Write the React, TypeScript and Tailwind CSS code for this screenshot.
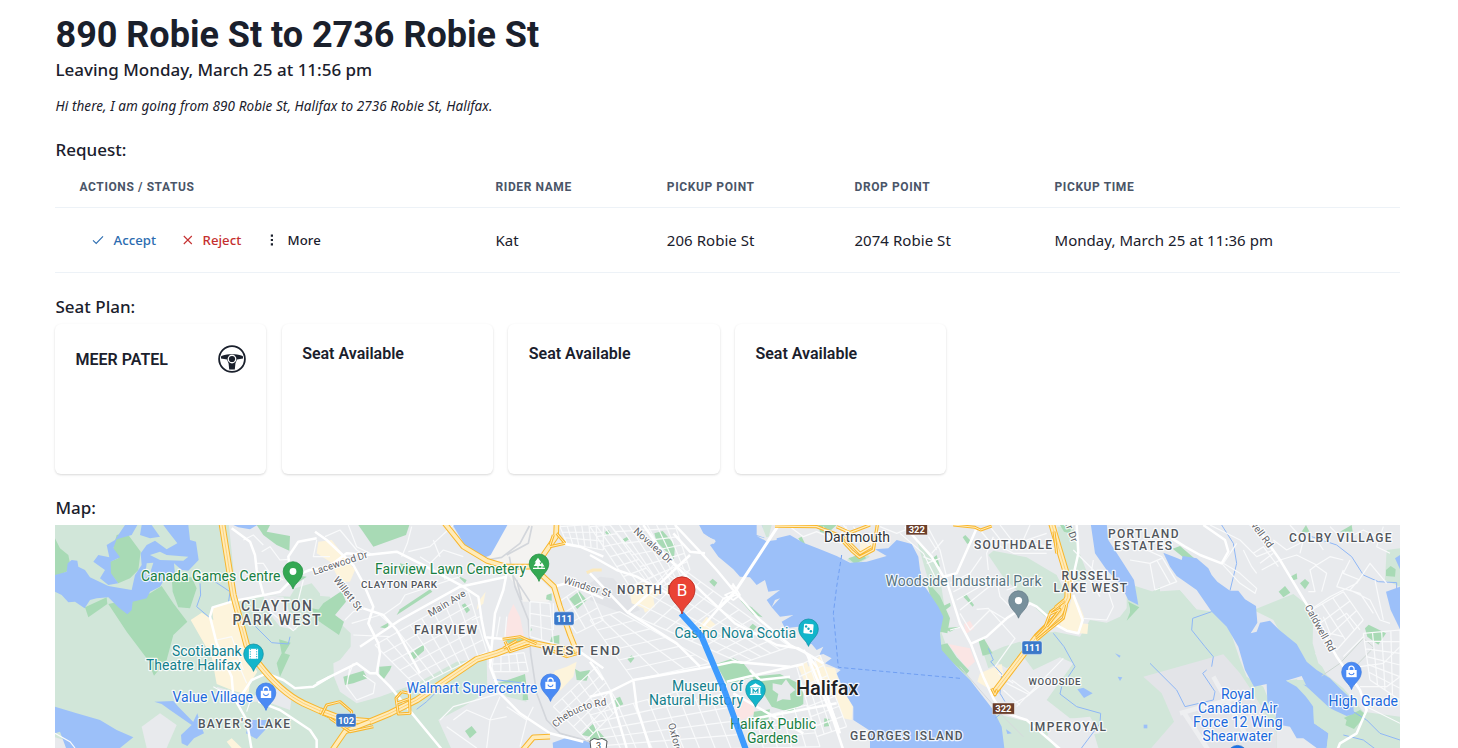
import type { ReactNode } from "react";

type Pt = [number, number];

/* ---------- map geometry ---------- */

// Each map sheet is drawn at triple scale, offset by its western edge.
const SHEET_X = { a: 50, b: 320, c: 590, d: 860, e: 1130 } as const;
type SheetId = keyof typeof SHEET_X;

function Sheet({ id, children }: { id: SheetId; children: ReactNode }) {
  return <g transform={`translate(${SHEET_X[id]} 520) scale(0.33333)`}>{children}</g>;
}

const lerp = (p: Pt, q: Pt, t: number): Pt => [p[0] + (q[0] - p[0]) * t, p[1] + (q[1] - p[1]) * t];

// Street grid inside the quadrilateral a-b-c-d.
function streets(a: Pt, b: Pt, c: Pt, d: Pt, nu: number, nv: number) {
  let path = "";
  for (let i = 0; i <= nu; i++) {
    const p = lerp(a, b, i / nu);
    const q = lerp(d, c, i / nu);
    path += `M${p[0].toFixed(1)},${p[1].toFixed(1)}L${q[0].toFixed(1)},${q[1].toFixed(1)}`;
  }
  for (let j = 0; j <= nv; j++) {
    const p = lerp(a, d, j / nv);
    const q = lerp(b, c, j / nv);
    path += `M${p[0].toFixed(1)},${p[1].toFixed(1)}L${q[0].toFixed(1)},${q[1].toFixed(1)}`;
  }
  return path;
}

const C = {
  urban: "#e8eaed",
  nature: "#d1e6d9",
  park: "#a8dab5",
  water: "#9cc0f9",
  shop: "#fdf4dc",
  health: "#fbe5e4",
  rail: "#f4f3f1",
};

const AREAS: [SheetId, string, string[]][] = [
  ["a", C.nature, ["0,0 960,0 960,700 0,700"]],
  ["b", C.urban, ["0,0 850,0 850,700 0,700"]],
  ["a", C.urban, [
    "535,0 830,0 830,245 785,190 735,205 720,230 640,225 560,240",
    "275,620 330,580 380,615 350,684 290,684", "15,652 60,665 80,690 15,690",
    "500,500 600,530 690,505 725,530 720,570 650,545 560,545 520,540",
    "640,225 700,230 740,330 690,320 650,270",
  ]],
  ["b", C.nature, [
    "-30,225 30,230 50,300 92,340 92,380 60,420 40,430 42,470 60,515 110,550 180,530 290,490 410,425 500,415 502,515 430,560 355,600 400,700 -30,700",
    "520,490 600,470 620,545 560,530",
  ]],
  ["c", C.nature, ["505,15 545,15 535,55 510,45", "770,120 800,135 840,110 820,95", "640,640 700,610 780,640 800,700 640,700"]],
  ["c", C.urban, ["640,600 790,600 840,640 800,700 600,700"]],
  ["d", C.nature, [
    "385,105 400,92 500,112 590,165 622,230 580,270 555,290 500,240 430,172",
    "585,335 660,350 690,300 740,308 780,290 800,265 900,200 900,700 720,700 690,600 630,595 560,540 640,430 600,412 520,450 480,395 540,340",
    "592,20 640,20 655,90 690,180 630,185 600,80", "480,365 510,392 440,445 415,430 385,445 372,405 430,380",
    "405,580 480,600 540,610 610,700 425,700", "170,60 235,140 255,270 245,340 262,385 320,460 345,500 300,470 235,400 225,250",
  ]],
  ["d", C.urban, ["590,600 690,590 720,640 640,650 600,700 560,650", "700,0 760,0 790,60 860,80 860,200 740,120"]],
  ["e", C.nature, [
    "-10,190 70,215 150,210 200,268 250,275 300,330 330,420 350,470 400,500 440,600 440,700 -10,700",
    "370,270 490,222 550,270 548,370 565,430 600,460 660,500 700,570 810,560 810,700 590,700 480,480 570,480 480,390 430,300",
    "770,90 810,85 810,200 765,180",
  ]],
  ["e", "#e3e4e8", ["40,470 280,403 330,460 370,520 440,640 440,700 50,700 132,605 95,520"]],
  ["e", C.urban, ["555,400 600,380 650,430 720,470 810,540 810,590 700,575 640,505 590,465", "70,190 140,195 240,268 200,268 150,210"]],
  ["b", C.rail, ["560,0 730,0 705,60 655,110 655,170 700,215 685,245 610,245 590,200 560,160 500,130 510,105"]],
  ["c", "#e1e3e7", ["30,170 70,175 150,270 110,285 0,240 0,190"]],

  ["a", C.shop, ["422,300 455,278 490,300 485,262 548,242 590,400 622,455 600,490 595,525 550,512 500,492 485,410", "530,665 545,655 575,684 545,684"]],
  ["b", C.shop, ["-5,65 35,60 105,150 90,185 60,185 30,125 -10,100", "740,440 770,425 760,470 720,512 690,482 705,452", "475,245 497,215 490,250 470,270", "440,90 480,108 520,135 500,135"]],
  ["c", C.shop, ["120,215 145,190 215,190 205,225 190,235 195,260 165,278 160,265 125,250", "330,315 350,290 378,315 340,345", "622,435 650,425 655,440 690,408 708,440 735,445 745,480 788,560 785,600 760,595 735,520 650,500"]],
  ["d", C.shop, ["640,220 660,260 672,290 660,340 605,325 600,312 625,270", "660,310 685,312 682,342 658,340", "360,460 425,432 432,475 402,515 352,485", "0,60 40,60 30,95 0,95"]],
  ["b", C.health, ["580,252 600,290 612,348 555,350 565,285"]],
  ["c", C.health, ["440,552 480,535 497,580 455,600 430,578"]],
  ["d", C.health, ["312,312 330,302 343,325 318,342", "265,372 330,385 345,425 322,445 290,405"]],

  ["a", C.park, [
    "15,55 30,85 55,105 60,130 50,155 15,170", "200,45 230,38 272,95 265,150 240,175 205,190 180,160 180,125 205,115 188,90",
    "335,198 370,250 412,305 370,345 350,420 312,467 290,415 230,335 175,252 230,240 300,220", "105,262 170,232 172,252 115,292",
    "362,128 382,170 425,172 440,205 420,265 385,262 368,215", "620,15 660,15 650,35 720,48 718,92 680,75 640,45",
    "687,358 722,368 703,400 720,405 690,470 680,430 695,400", "785,265 840,275 840,318 800,300",
    "730,165 770,170 725,200",
  ]],
  ["b", C.park, [
    "115,15 268,15 258,45 160,80", "10,250 65,213 78,245 45,285 72,305 57,345 5,310 -20,290", "230,285 240,268 330,208 337,215",
    "265,405 312,372 312,392 280,420", "425,255 435,250 450,270 440,280", "180,322 205,308 205,327", "70,470 130,452 142,475 100,490 75,495",
    "178,440 215,437 210,450 188,482 178,470", "555,360 622,353 580,382", "748,237 778,214 800,240 772,267", "765,447 780,455 810,450 800,482 770,480",
    "435,633 455,618 470,637 450,655", "785,645 818,612 860,660", "695,350 718,345 718,372 690,365", "530,492 615,462 625,540 608,540 610,485",
    "410,165 440,180 435,190", "240,130 280,140 270,165 245,155", "680,225 695,220 695,242 678,238", "632,320 636,330 630,335",
  ]],
  ["c", C.park, [
    "193,40 218,33 255,75 252,118 200,65", "358,185 368,176 382,188 373,200", "378,432 430,415 460,430 492,470 440,485 410,490",
    "487,470 570,462 625,490 640,520 640,552 600,577 545,560 520,520 500,515", "492,575 540,568 535,598 500,605 490,590", "478,322 488,311 500,320 490,332",
    "112,417 125,406 133,415 122,429", "73,537 90,530 100,553 80,562", "0,618 40,658 0,660", "703,595 718,597 720,618 702,620",
    "450,240 485,262 518,292 490,285", "98,58 112,50 118,58 104,66", "45,36 55,30 62,40 52,47", "685,15 740,15 710,42 690,35", "625,55 635,50 655,92 648,96", "775,115 820,100 828,115 795,132",
  ]],
  ["c", C.urban, ["548,490 575,495 588,478 600,495 616,510 600,522 602,540 578,538 560,545 565,522 548,510"]],
  ["d", C.park, [
    "240,375 262,370 290,412 328,452 318,464 280,430 246,402", "200,182 240,228 270,295 262,340 240,335 247,290 210,228", "355,360 372,356 398,400 368,407",
    "308,52 316,45 335,65 322,72", "308,228 318,222 342,255 338,260", "218,115 230,105 240,140 225,135", "600,15 635,15 630,40 612,35",
    "245,260 270,248 272,258 250,275", "250,325 300,320 270,335", "805,245 838,262 800,302 812,272",
  ]],
  ["e", C.park, [
    "128,86 150,78 205,125 182,130", "446,215 465,198 481,218 460,232", "478,172 500,160 502,177 485,182", "510,190 525,177 538,188 525,208",
    "705,325 716,314 768,340 745,374 712,350", "768,150 782,138 797,148 795,170 768,168", "640,595 690,570 708,585 672,627 645,615", "0,260 25,262 0,290",
    "515,35 528,15 540,38", "630,35 665,15 668,35",
  ]],

  ["a", C.water, [
    "15,165 50,155 53,130 65,120 82,122 85,140 105,150 120,172 175,198 245,210 255,165 275,135 272,100 290,75 315,62 350,88 382,70 355,35 340,15 415,15 420,60 438,65 446,120 415,152 395,150 372,130 375,165 345,175 330,200 300,215 290,235 248,245 245,270 232,283 205,262 175,232 140,235 120,240 104,265 75,245 55,247 35,225 15,215",
    "225,15 262,15 245,45 200,58 190,85 210,112 182,125 183,160 205,190 175,195 150,175 165,150 130,125 145,105 178,112 170,75 195,60",
    "275,15 305,15 330,50 300,55 270,45", "15,560 80,580 150,600 200,630 250,652 210,684 48,684 30,635 15,640",
    "313,545 370,543 385,560 432,608 425,615 360,570 335,552", "393,645 425,615 442,580 452,615 462,640 432,655 412,678 395,670",
    "588,640 600,600 652,600 650,625 620,657", "550,15 622,15 600,28 565,22",
  ]],
  ["a", C.nature, ["300,105 330,95 350,105 415,110 400,122 330,120", "290,130 310,128 300,160 285,175"]],
  ["b", C.water, ["395,10 565,10 512,105 482,118 440,85", "698,668 735,655 800,664 850,690 700,690"]],
  ["c", C.water, [
    "325,10 515,10 525,62 560,55 600,45 640,68 690,88 740,108 780,128 830,125 890,108 855,88 895,85 920,60 965,72 985,110 990,150 1005,200 1045,260 1060,290 1050,340 1055,390 1100,440 1140,480 1210,570 1235,620 1245,700 840,700 840,632 790,600 790,560 765,520 740,460 752,450 705,430 725,415 700,402 688,405 700,380 680,390 665,372 650,375 648,350 630,340 625,320 585,325 575,305 610,285 570,290 545,262 570,235 555,240 545,262 530,240 570,210 535,215 525,180 500,195 480,172 450,170 430,148 385,110 360,75 378,65 340,40",
  ]],
  ["c", C.urban, ["320,22 340,45 376,60 372,72 350,62", "500,15 515,15 530,55 500,45", "500,48 525,55 560,40 560,60 530,64", "830,650 840,684 810,684"]],
  ["d", C.urban, ["0,655 25,690 0,690"]],
  ["d", C.water, [
    "692,10 740,10 745,60 790,130 822,180 835,255 805,240 780,190 740,150 705,100", "652,508 670,503 698,520 672,534", "765,400 782,407 778,413", "773,470 787,472 780,483", "438,628 455,640 442,642",
  ]],
  ["e", C.water, [
    "100,98 135,112 155,120 158,108 200,115 235,145 245,165 262,185 300,212 325,212 345,238 378,258 382,308 362,340 380,335 390,308 420,302 448,330 500,372 530,425 560,450 600,475 635,510 668,540 672,582 650,588 590,560 540,520 515,468 468,482 500,492 528,495 550,560 552,610 595,640 590,684 560,684 520,655 500,655 480,620 435,612 438,580 412,545 410,492 372,500 345,450 325,380 290,320 245,275 200,210 140,168 120,140",
    "768,215 810,200 810,328 782,270", "795,115 810,105 810,148", "41,614 52,614 52,625 41,625",
  ]],
  ["e", C.nature, ["468,482 500,478 535,505 595,560 650,600 640,640 600,684 590,684 596,640 552,610 550,560 528,530 500,500"]],
];

const CREEKS: [SheetId, string][] = [
  ["a", "M450,190L452,225 440,260 485,298M495,185L540,215 535,250M615,318L665,368 715,372 720,350"],
  ["b", "M345,520L320,545 290,568M520,478L615,490"],
  ["d", "M385,385L400,420 392,425 425,462 420,520 435,545M580,340L612,380 645,440 605,500 600,522 650,560 722,580 720,610 660,690M430,575L405,595"],
  ["e", "M275,15L310,70 320,130 300,212M245,275L188,295 185,330 225,380 250,410 245,440M60,430L140,510 165,560 250,540 255,515 218,460 230,450M545,50L620,75 665,110 700,165 745,185 800,188 800,205M670,575L710,600 750,640 810,660M640,645L700,660 740,690"],
];

const MINOR: [SheetId, string][] = [
  ["a", "M635,95L660,80 690,120 715,118M580,60L610,45 640,75M700,180L660,160 640,130 620,130M500,360L545,350 580,450M520,430L560,420 590,490M600,545L590,575M655,270L730,332 745,318M15,640L60,665 75,684M760,180L740,260M800,60L790,110 840,110M490,500L545,530"],
  ["b", streets([165, 375], [445, 215], [500, 395], [290, 500], 8, 5)],
  ["b", streets([520, 410], [612, 398], [625, 455], [515, 455], 4, 2)],
  ["b", streets([700, 560], [830, 440], [900, 560], [800, 660], 5, 5) + streets([720, 20], [850, 10], [850, 90], [740, 70], 6, 3)],
  ["b", streets([710, 250], [800, 190], [850, 300], [770, 340], 3, 3) + streets([630, 245], [690, 250], [700, 370], [630, 350], 2, 3)],
  ["b", "M15,50L60,30 110,90 140,110M85,15L110,80 160,105M275,20L262,70 245,110M265,95L330,80 400,15M300,110L330,130 370,90 430,110M340,60L360,110M370,140L375,180M190,285L240,250 255,225 420,170M75,300L100,275 130,265M95,310L180,285 230,330M100,345L210,350M90,440L80,500 110,540 160,520 165,490 130,465M100,430L85,470M455,300L480,290M360,600L400,560 540,520M400,600L440,570 510,600 560,590M380,620L470,684M540,530L510,600 500,684M560,560L620,600 600,680M540,290L530,350M560,290L555,350M515,440L540,510 620,515M640,560L620,600M700,250L700,330"],
  ["c", streets([115, 280], [255, 130], [600, 380], [455, 430], 5, 9)],
  ["c", streets([0, 300], [90, 275], [360, 430], [130, 480], 3, 6) + streets([0, 585], [390, 480], [470, 684], [50, 700], 9, 5)],
  ["c", streets([50, 0], [250, 0], [300, 150], [200, 210], 7, 6) + streets([0, 20], [60, 15], [190, 170], [120, 200], 3, 6)],
  ["c", streets([620, 440], [690, 405], [770, 620], [680, 650], 4, 7) + streets([500, 595], [650, 555], [690, 680], [520, 684], 4, 3)],
  ["c", "M600,20L640,50 680,35 740,60 770,20M760,15L800,60 840,40M790,20L840,80M700,20L720,60 790,80"],
  ["d", "M120,40L190,100 240,200M200,15L240,90 262,180M250,60L215,100M190,110L225,125M205,50L230,90M200,130L240,115M270,190L330,160 365,110M280,215L330,190M290,240L410,170M300,270L400,190M300,280L330,330 390,270 440,300M350,268L385,265 465,355 405,440M410,180L420,230 460,270M440,210L470,200M400,50L380,100 385,150M360,30L385,60 460,100 560,100M390,20L430,70 500,60 560,40M420,15L470,80M510,15L490,60 600,90M270,330L300,322M440,490L510,525M455,480L510,520M430,510L480,555M425,570L500,530 560,480M470,560L610,415M415,460L460,490M670,295L740,300 760,260 740,200 700,150 640,90M700,120L690,180 720,230M60,20L110,40 160,20"],
  ["e", streets([545, 270], [640, 215], [700, 300], [620, 390], 3, 3) + streets([700, 340], [810, 330], [810, 540], [720, 480], 4, 6)],
  ["e", "M0,120L60,130 75,210 140,185 95,110 50,90M60,130L95,115M80,120L120,190M240,15L290,40 330,60 380,110 430,90M275,130L330,190 375,220 380,205 330,160 280,130 320,70M340,90L365,140 380,160M370,100L400,80 430,120 445,140M390,130L430,100M395,150L450,120M450,120L500,105 530,120 560,135 600,110 640,120M430,60L470,90 530,60 600,60M480,15L520,60 510,100M560,135L540,150 555,215 535,215M555,135L590,160 575,215M540,270L600,230 680,190 720,130 770,190M640,150L620,200M660,120L640,160 690,180M690,175L660,210 720,240 750,300 780,310M735,180L745,230 760,300M760,20L740,80 780,100M600,20L640,60 700,30 760,60M580,90L560,60M620,300L650,280 690,330M580,290L600,340 640,350M640,410L680,370 700,350M690,500L770,500 810,470M690,440L760,430 810,380M710,560L810,610M620,200L690,220 730,280"],
];

const MAJOR: [SheetId, string][] = [
  ["a", "M545,25L600,65 615,105 620,150 640,222M555,242L640,226 690,215 740,165 780,150 815,145M800,55L745,65 715,110 720,150M555,242L488,262 480,290 500,370 545,470 550,530 590,600 605,690M575,525L605,480 650,460 700,480 735,505 790,500 840,470M625,545L690,570 780,630 800,660 800,690"],
  ["b", "M-15,35L20,60 100,135 130,190 160,260 145,310 175,370 180,400 170,460 210,500 375,700M-10,490L110,430 150,460 175,460M40,130L80,100 140,105 230,95 300,130 430,200 475,230 485,300 495,350 515,400 510,440 540,520 600,580 690,640 790,665M560,160L550,210 525,280 510,430M120,380L240,300 420,200 560,170M130,265L190,285 230,330 300,460M720,70L780,80 850,110M700,200L740,190 850,235M780,395L850,445M495,352L560,358"],
  ["c", "M0,105L80,150 140,170 250,230M160,15L220,100 290,170 340,220 435,310 560,375 625,385 700,430M255,15L330,95 380,150 430,210 510,300 600,375M345,100L300,95 250,40M0,160L110,275 260,370 330,440M110,280L200,200 300,105M0,530L60,515 130,480 360,440 430,425 600,440M340,318L390,260 430,225M410,485L640,432M0,425L40,480M130,480L140,560 180,684M60,515L110,684M480,450L510,480 600,470M430,520L640,640M600,375L650,400 730,600 760,690M640,390L680,440 750,640M470,600L740,550"],
  ["d", "M135,20L170,60 215,110 262,190 300,310 332,370 370,470 400,535 425,575 500,600 615,700M335,370L380,350 440,295 470,275 510,250 530,260 570,295M580,310L620,332 655,340 668,300 640,225M635,190L655,100 650,15M230,170L262,190M250,170L290,160 330,70 352,20"],
  ["e", "M370,5L450,120 540,270 620,410 690,510 710,570 680,640 630,670 620,695M125,55L165,80 210,105 275,130 295,95 285,60 220,15"],
];

const HIGHWAYS: [SheetId, number, string][] = [
  ["a", 15, "M514,0L530,100 550,225 590,375 625,430Q690,515 760,550L845,588"],
  ["b", 15, "M0,572L70,598 150,605 210,580 290,540 470,418 530,400 620,365 690,380 770,395"],
  ["b", 12, "M370,5L430,80 500,122 560,140 630,140M665,165L702,200 720,260 750,345 770,395"],
  ["b", 12, "M710,0L708,50 670,105M30,700L75,635 150,605M600,700L640,652 690,650"],
  ["b", 4, "M5,585L20,555 60,545 95,575 92,600M30,595L90,635 160,620M245,515L268,520 270,580 235,582 228,535 245,515M228,550L270,535M548,358L600,350 650,372M550,385L590,362M555,365L570,395 630,375M710,40L735,70M690,80L735,70M690,390L740,410 775,400M700,45L690,75"],
  ["c", 5, "M555,18L680,20 738,42 785,92 808,112 850,90 858,40 862,15M740,20L780,38 840,15M760,50L810,100 845,80"],
  ["d", 15, "M570,-5L595,80 625,180 623,232 600,280 530,350 402,518"],
  ["d", 4, "M612,245L572,275 555,320 525,350M620,255L610,295 560,335 530,360M395,505L405,525 412,508M582,35L590,100M280,15L345,22 362,30 395,18M612,240L585,262M565,285L600,268 560,320"],
];

function MapCanvas() {
  return (
    <g>
      <rect x="50" y="520" width="1360" height="230" fill={C.urban} />
      {AREAS.map(([id, fill, polys], i) => (
        <Sheet key={i} id={id}>
          {polys.map((p, j) => (
            <polygon key={j} points={p} fill={fill} />
          ))}
        </Sheet>
      ))}
      <g fill="none" strokeLinejoin="round">
        {CREEKS.map(([id, d], i) => (
          <Sheet key={i} id={id}>
            <path d={d} stroke="#8fb7f6" strokeWidth="3" />
          </Sheet>
        ))}
        <Sheet id="b">
          <path d="M490,122L545,112 600,70 628,18M560,105L625,70 636,18M568,110L585,200 625,300 632,400 650,520 680,600 720,640 850,675M575,160L630,245M590,180L605,240" stroke="#d3d6db" strokeWidth="5" />
        </Sheet>
        <Sheet id="c">
          <path d="M-10,158L10,150 35,150" stroke="#fbe9bd" strokeWidth="9" />
        </Sheet>
        <Sheet id="d">
          <path d="M300,440L360,510 430,590 490,650" stroke="#d6d8dc" strokeWidth="3" />
        </Sheet>
        <Sheet id="e">
          <path d="M250,470L345,640M160,575L235,690M150,580L330,530" stroke="#eeeff1" strokeWidth="14" />
          <path d="M575,468L630,430 700,355 732,382 680,435" stroke="#cdd6d2" strokeWidth="3" />
        </Sheet>
        {MINOR.map(([id, d], i) => (
          <Sheet key={i} id={id}>
            <path d={d} stroke="#f9fafb" strokeWidth="3.6" />
          </Sheet>
        ))}
        {MAJOR.map(([id, d], i) => (
          <Sheet key={i} id={id}>
            <path d={d} stroke="#ffffff" strokeWidth="7.5" />
          </Sheet>
        ))}
        <Sheet id="c">
          <path d="M568,12L435,215 390,262" stroke="#ffffff" strokeWidth="9" />
          <path d="M428,190L450,225 430,240 405,225 440,210 425,195M385,262L400,235 440,225" stroke="#ffffff" strokeWidth="5" />
          <path d="M755,105L740,200 730,280 745,442 1110,475" stroke="#6f9ff2" strokeWidth="3" strokeDasharray="13 8" />
        </Sheet>
        {HIGHWAYS.map(([id, w, d], i) => (
          <Sheet key={i} id={id}>
            <path d={d} stroke="#f8b62d" strokeWidth={w + 5} />
            <path d={d} stroke="#ffebb9" strokeWidth={w - 1} />
            {w === 15 && <path d={d} stroke="#fbc65a" strokeWidth="2" />}
          </Sheet>
        ))}
      </g>
    </g>
  );
}

/* ---------- map labels ---------- */

const GREEN = "#188043";
const TEAL = "#12808c";
const BLUE = "#1b69dc";
const GREY = "#50555b";

// text, x, baseline, width, size, colour, weight, rotation
type LabelSpec = [string, number, number, number, number, string, number?, number?];

const LABELS: LabelSpec[] = [
  ["Canada Games Centre", 141, 581, 139.5, 14, GREEN],
  ["Lacewood Dr", 314, 575, 57, 10, "#5f6368", 400, -18],
  ["CLAYTON", 241, 611, 71, 14, GREY, 500],
  ["PARK WEST", 232.5, 625, 88, 14, GREY, 500],
  ["Willett St", 333, 580, 40, 10, "#5f6368", 400, 52],
  ["CLAYTON PARK", 361, 587.5, 76, 9.8, GREY, 500],
  ["Fairview Lawn Cemetery", 375, 573.5, 151, 14, GREEN],
  ["Main Ave", 430.5, 617, 42, 10, "#5f6368", 400, -31],
  ["FAIRVIEW", 414, 634, 63, 12, GREY, 500],
  ["Windsor St", 563, 583, 49, 10, "#5f6368", 400, 17],
  ["WEST END", 542, 655, 78, 13.5, GREY, 500],
  ["Scotiabank", 172, 656, 69.5, 14, TEAL],
  ["Theatre Halifax", 146, 670, 95, 14, TEAL],
  ["Value Village", 172.5, 702, 80.5, 14, BLUE],
  ["BAYER'S LAKE", 198, 728, 92, 12, GREY, 500],
  ["Walmart Supercentre", 406.5, 693, 131, 14, BLUE],
  ["NORTH END", 617, 594, 76, 12, GREY, 500],
  ["Novalea Dr", 633, 532, 48, 10, "#5f6368", 400, 42],
  ["Casino Nova Scotia", 674.5, 638, 121.5, 14, TEAL],
  ["Museum of", 672, 691, 71, 14, TEAL],
  ["Natural History", 649, 705, 94, 14, TEAL],
  ["Halifax Public", 730, 728.5, 86, 14, GREEN],
  ["Gardens", 747, 742.5, 51, 14, GREEN],
  ["Halifax", 796, 695, 62.5, 20, "#202124", 500],
  ["Dartmouth", 824, 542, 66, 14, "#303438"],
  ["Oxford St", 668, 724, 42, 10, "#5f6368", 400, 75],
  ["GEORGES ISLAND", 850, 740, 112.5, 12, GREY, 500],
  ["SOUTHDALE", 974, 549, 78, 12, GREY, 500],
  ["PORTLAND", 1108, 538, 70.5, 12, GREY, 500],
  ["ESTATES", 1114, 550, 58, 12, GREY, 500],
  ["RUSSELL", 1061.5, 580, 57, 12, GREY, 500],
  ["LAKE WEST", 1053.5, 592, 73.5, 12, GREY, 500],
  ["Woodside Industrial Park", 885.5, 586, 156, 14, "#587581"],
  ["WOODSIDE", 1028.5, 685, 52, 9.6, GREY, 500],
  ["IMPEROYAL", 1030, 731, 76, 12, GREY, 500],
  ["COLBY VILLAGE", 1289, 542, 102.5, 12, GREY, 500],
  ["Caldwell Rd", 1304.5, 607, 52, 10, "#5f6368", 400, 61],
  ["Caldwell Rd", 1237, 507, 52, 10, "#5f6368", 400, 53],
  ["Baker Dr", 1058, 505, 40, 10, "#5f6368", 400, 70],
  ["High Grade", 1328.5, 705.5, 69.5, 14, BLUE],
  ["Royal", 1221, 699, 33.5, 14, BLUE],
  ["Canadian Air", 1198, 713, 79.5, 14, BLUE],
  ["Force 12 Wing", 1193, 727, 89.5, 14, BLUE],
  ["Shearwater", 1202.5, 741, 70, 14, BLUE],
];

function Label({ spec }: { spec: LabelSpec }) {
  const [text, x, y, width, size, color, weight = 400, angle = 0] = spec;
  return (
    <text
      x={x}
      y={y}
      textLength={width}
      fontSize={size}
      fontWeight={weight}
      fill={color}
      stroke="#ffffff"
      strokeOpacity="0.85"
      strokeWidth="2.4"
      strokeLinejoin="round"
      paintOrder="stroke"
      transform={angle ? `rotate(${angle} ${x} ${y})` : undefined}
    >
      {text}
    </text>
  );
}

function Pin({ x, y, color, edge, children }: { x: number; y: number; color: string; edge: string; children: ReactNode }) {
  return (
    <g transform={`translate(${x} ${y})`}>
      <path d="M0,17.6C-1.8,11.4 -9.8,8 -9.8,0A9.8,9.8 0 0 1 9.8,0C9.8,8 1.8,11.4 0,17.6Z" fill={color} stroke={edge} strokeWidth="0.7" />
      {children}
    </g>
  );
}

const Bag = () => (
  <g>
    <path d="M-5.2,-2H5.2V5.2H-5.2Z" fill="#fff" />
    <path d="M-2.6,-2V-3.2A2.6,2.6 0 0 1 2.6,-3.2V-2" fill="none" stroke="#fff" strokeWidth="1.3" />
    <path d="M-2.6,0.8A2.7,2.7 0 0 0 2.6,0.8" fill="none" stroke="#4a86f0" strokeWidth="1.2" />
  </g>
);

function Shield({ x, y, w, h, color, children }: { x: number; y: number; w: number; h: number; color: string; children: string }) {
  return (
    <g>
      <rect x={x} y={y} width={w} height={h} rx={color === "#6b3f2c" ? 0 : 2} fill={color} stroke="#ffffff" strokeOpacity="0.55" strokeWidth="0.8" />
      <text x={x + w / 2} y={y + h / 2 + 3.4} textAnchor="middle" fontSize="9.4" fontWeight="700" fill="#fff">
        {children}
      </text>
    </g>
  );
}

function RouteMap() {
  return (
    <svg viewBox="55 525 1345 223" className="block h-[223px] w-full" fontFamily="Roboto, sans-serif" role="img" aria-label="Route map">
      <MapCanvas />
      {LABELS.map((l, i) => (
        <Label key={i} spec={l} />
      ))}
      <path id="chebucto" d="M556,728Q574,709 608,705" fill="none" />
      <text fontSize="10" fill="#5f6368" stroke="#fff" strokeWidth="2" paintOrder="stroke">
        <textPath href="#chebucto">Chebucto Rd</textPath>
      </text>

      <Shield x={554} y={611.8} w={20} h={13.4} color="#3b78c9">111</Shield>
      <Shield x={336} y={713.5} w={20} h={13.4} color="#3b78c9">102</Shield>
      <Shield x={1022} y={641} w={20} h={13.4} color="#3b78c9">111</Shield>
      <Shield x={906} y={523.5} w={21.4} h={11.4} color="#6b3f2c">322</Shield>
      <Shield x={992.4} y={703} w={22} h={11.2} color="#6b3f2c">322</Shield>
      <path d="M590,741L594,738.5 598,739.5 602,738.5 607,741 606,750H591Z" fill="#fff" stroke="#55595e" strokeWidth="1" />
      <text x="598.5" y="749" textAnchor="middle" fontSize="9" fill="#3c4043">3</text>

      <path d="M681,613.5L700,634.5 702,637.5 724,689.5 746,750" fill="none" stroke="#3094ff" strokeOpacity="0.93" strokeWidth="6" strokeLinejoin="round" />

      <Pin x={293} y={571.5} color="#34a853" edge="#1e8e3e">
        <circle r="3.4" fill="#fff" />
      </Pin>
      <Pin x={539} y={563.8} color="#34a853" edge="#1e8e3e">
        <path d="M-1,-6L-4.4,-1.4H-3L-5.4,2.2H-1.6V4H-6V5.2H6V4H3.4V2.6H5.4L3,-1.4 1.4,0.8 0.6,-1.4H2.4ZM-0.4,2.2H2.4V4H-0.4Z" fill="#fff" />
      </Pin>
      <Pin x={253.5} y={653.8} color="#12b5cb" edge="#0e8c9d">
        <path d="M-4.6,-5H4.6V5H-4.6Z" fill="#fff" />
        <path d="M-3.2,-5V5M3.2,-5V5" stroke="#12b5cb" strokeWidth="1" strokeDasharray="1.2 1.2" />
      </Pin>
      <Pin x={266} y={692.8} color="#4a8af4" edge="#3b78e0"><Bag /></Pin>
      <Pin x={550.5} y={683.8} color="#4a8af4" edge="#3b78e0"><Bag /></Pin>
      <Pin x={1351.5} y={672} color="#4a8af4" edge="#3b78e0"><Bag /></Pin>
      <Pin x={1237.5} y={755.2} color="#1a73e8" edge="#1765cc"><circle r="3" fill="#fff" /></Pin>
      <Pin x={808.5} y={628.8} color="#12b5cb" edge="#0e8c9d">
        <rect x="-4.8" y="-4.8" width="9.6" height="9.6" rx="1" fill="#fff" transform="rotate(5)" />
        <g fill="#12a5ba">
          <circle cx="-2.4" cy="-2.4" r="1.2" />
          <circle r="1.2" />
          <circle cx="2.4" cy="2.4" r="1.2" />
        </g>
      </Pin>
      <Pin x={755.5} y={689.6} color="#12b5cb" edge="#0e8c9d">
        <path d="M0,-6.4L5.6,-3.2V-2H-5.6V-3.2ZM-4.8,-1.6H4.8V4H-4.8ZM-5.6,4.2H5.6V5.4H-5.6Z" fill="#fff" />
        <path d="M-2.4,3.6V-0.4L0,2.2 2.4,-0.4V3.6" fill="none" stroke="#12a5ba" strokeWidth="1.2" />
      </Pin>
      <Pin x={1018.5} y={600.6} color="#78909c" edge="#5f7682">
        <circle r="3.6" fill="#fff" />
      </Pin>

      <path d="M682,614C681,606 669,601 669,589.8A13,13 0 0 1 695,589.8C695,601 683,606 682,614Z" fill="#ea4335" stroke="#b8261b" strokeWidth="0.8" />
      <text x="682" y="596" textAnchor="middle" fontSize="17" fontFamily="Roboto, sans-serif" fill="#fff">B</text>
    </svg>
  );
}

/* ---------- page ---------- */

const SteeringWheel = () => (
  <svg viewBox="-14 -14 28 28" className="size-7 text-[#1a202c]">
    <circle r="12.9" fill="none" stroke="currentColor" strokeWidth="1.8" />
    <path d="M-11,-2.4Q-10.5,-3.6 -5,-4.4 0,-5.4 5,-4.4 10.5,-3.6 11,-2.4V-0.6L5,0.4 3.4,4.6 2.8,10.4H-2.8L-3.4,4.6 -5,0.4 -11,-0.6Z" fill="currentColor" />
    <circle r="4.4" fill="#fff" />
    <circle r="3.1" fill="currentColor" />
  </svg>
);

const Heading = ({ children, className }: { children: ReactNode; className: string }) => (
  <h2 className={`pl-[0.5px] text-[17px] leading-[27px] font-medium ${className}`}>{children}</h2>
);

const Seat = ({ children, className }: { children: ReactNode; className?: string }) => (
  <div className={`h-[150px] w-[211.25px] rounded-md bg-white px-[20.5px] font-[Roboto,sans-serif] text-base leading-[19px] font-semibold shadow-[0_1px_3px_rgba(0,0,0,0.1),0_1px_2px_rgba(0,0,0,0.06)] ${className ?? "pt-5"}`}>
    {children}
  </div>
);

const COLUMNS = ["Actions / Status", "Rider Name", "Pickup Point", "Drop Point", "Pickup Time"];
const GRID = "grid grid-cols-[416px_171.3px_187.7px_200px_1fr] items-center border-b border-[#edf2f7] pl-[24.5px]";

export default function App() {
  return (
    <main className="h-[748px] overflow-hidden bg-white pt-[14px] pr-[58px] pl-[55px] font-['Noto_Sans','Open_Sans',sans-serif] text-[#1a202c]">
      <h1 className="pl-[0.5px] font-[Roboto,sans-serif] text-[36px] leading-[43px] font-bold tracking-[-0.02px]">890 Robie St to 2736 Robie St</h1>
      <Heading className="-mt-px">Leaving Monday, March 25 at 11:56 pm</Heading>
      <p className="mt-[13px] pl-[0.5px] text-[13.5px] leading-[21px] tracking-[0.07px] italic">
        Hi there, I am going from 890 Robie St, Halifax to 2736 Robie St, Halifax.
      </p>

      <Heading className="mt-[19px]">Request:</Heading>
      <section className="mt-[3px]">
        <div className={`${GRID} h-[42px] font-[Roboto,sans-serif] text-xs font-bold tracking-[0.6px] text-[#4a5568] uppercase`}>
          {COLUMNS.map((c) => (
            <span key={c}>{c}</span>
          ))}
        </div>
        <div className={`${GRID} h-[65px] text-[15px] tracking-[0.05px]`}>
          <div className="flex items-center pt-px pl-3 text-[13.2px] font-medium">
            <button className="flex w-[90px] items-center gap-[10px] text-[#2b6cb0]">
              <svg viewBox="0 0 12 12" className="size-3"><path d="M1 6.4 4.2 9.4 11 2.4" fill="none" stroke="currentColor" strokeWidth="1.1" /></svg>
              Accept
            </button>
            <button className="flex w-[84px] items-center gap-[9px] text-[#c53030]">
              <svg viewBox="0 0 12 12" className="size-3"><path d="M1.8 2 9.8 10M9.8 2 1.8 10" fill="none" stroke="currentColor" strokeWidth="1.1" /></svg>
              Reject
            </button>
            <button className="flex items-center gap-[10px]">
              <svg viewBox="0 0 12 12" className="size-3"><path d="M4.8 0.6h2.2v2.2H4.8ZM4.8 4.9h2.2v2.2H4.8ZM4.8 9.2h2.2v2.2H4.8Z" fill="currentColor" /></svg>
              More
            </button>
          </div>
          <span>Kat</span>
          <span>206 Robie St</span>
          <span>2074 Robie St</span>
          <span>Monday, March 25 at 11:36 pm</span>
        </div>
      </section>

      <Heading className="mt-5">Seat Plan:</Heading>
      <section className="mt-[4px] flex gap-[15.4px]">
        <Seat className="pt-[21px]">
          <div className="flex items-center justify-between">
            MEER PATEL
            <SteeringWheel />
          </div>
        </Seat>
        <Seat>Seat Available</Seat>
        <Seat>Seat Available</Seat>
        <Seat>Seat Available</Seat>
      </section>

      <Heading className="mt-5">Map:</Heading>
      <section className="mt-[4px]">
        <RouteMap />
      </section>
    </main>
  );
}
